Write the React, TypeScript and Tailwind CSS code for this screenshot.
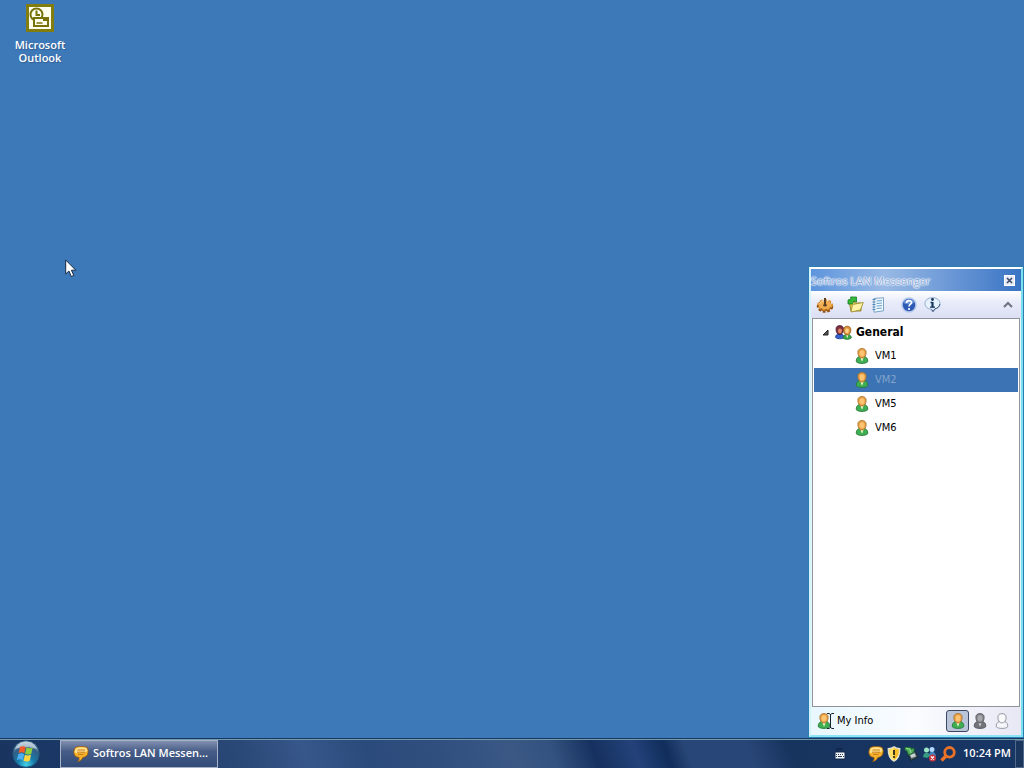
import React from "react";

type Tone = "color" | "grey" | "white";

const TONES = {
  color: { head: "#eda447", hi: "#ffd184", line: "#a8702c", body: "#3fae52", edge: "#257b3a", tie: "#f4f7c5" },
  grey: { head: "#85878c", hi: "#b4b6ba", line: "#55575c", body: "#73757b", edge: "#505258", tie: "#d9dadd" },
  white: { head: "#f4f5f9", hi: "#ffffff", line: "#8d9099", body: "#f4f5f9", edge: "#8d9099", tie: "#ffffff" },
};

function Person({ tone = "color" }: { tone?: Tone }) {
  const t = TONES[tone];
  return (
    <svg width="14" height="16" viewBox="0 0 14 16" aria-hidden="true" className="shrink-0">
      <path d="M1.300 13.800C1 11 2 9.300 4.500 8.500h5c2.500.8 3.500 2.500 3.200 5.300-2 2.200-9.400 2.200-11.400 0Z" fill={t.body} stroke={t.edge} strokeWidth="0.900" />
      <path d="M5 8.500 7 13.800 9 8.500Z" fill={t.tie} />
      <path d="M2.900 4.300C2.700 2 4.500.6 7 .6s4.300 1.400 4.100 3.700C11.200 7.700 9.300 10 7 10S2.800 7.700 2.900 4.300Z" fill={t.head} stroke={t.line} strokeWidth="0.900" />
      <ellipse cx="7" cy="5.200" rx="2.400" ry="3" fill={t.hi} opacity="0.700" />
    </svg>
  );
}

function Group() {
  return (
    <svg width="17" height="15" viewBox="0 0 17 15" aria-hidden="true" className="shrink-0">
      <path d="M.6 12.500C.5 10 2 9 4.500 8.800 7.500 9 9 10 8.800 13 6 14.300 2 14 .6 12.500Z" fill="#3462cf" stroke="#1d3d91" strokeWidth="0.8" />
      <path d="M1 4.500C.8 1.800 2.500.6 4.800.6s4 1.500 3.800 4C8.500 7.500 7 9.600 4.800 9.600S1.200 7.500 1 4.500Z" fill="#7d2f3c" stroke="#4c1c3c" strokeWidth="0.8" />
      <ellipse cx="5" cy="6" rx="2" ry="2.400" fill="#e58b68" />
      <path d="M8 13C8 10.600 9.500 9.500 12 9.400c2.800.1 4.400 1.300 4.300 3.600C14 14.800 10 14.800 8 13Z" fill="#36a545" stroke="#1e762e" strokeWidth="0.8" />
      <path d="m11 9.500 1.200 4 1.300-4z" fill="#f3f5d0" />
      <path d="M8.600 5C8.500 2.500 10 1.200 12.200 1.200S16 2.500 15.800 5c0 3-1.500 5-3.600 5S8.600 8 8.600 5Z" fill="#dc9136" stroke="#92591d" strokeWidth="0.8" />
      <ellipse cx="12" cy="5.800" rx="1.900" ry="2.500" fill="#ffd38b" />
    </svg>
  );
}

function Bubble() {
  return (
    <svg width="16" height="16" viewBox="0 0 16 16" aria-hidden="true" className="shrink-0">
      <path d="M2.500 1.500C5 .2 11.500.2 14 1.500c1.800 2.700 1.500 6.500-.5 8.500-1.300 1-2.500 1.300-3.700 1.500-.8 2.200-2.300 3.500-5.300 4 1.500-1.300 1.800-2.500 1.500-4-1.500-.2-3-.7-4-1.700C.2 7.500.6 4 2.500 1.500Z" fill="#f6b22c" stroke="#95570d" strokeWidth="0.800" />
      <path d="M3 2C5.500 1 11 1 13.500 2c.8 1.500.9 2.500.7 3.500-4 1.300-8.500 1.800-12.500 1.200C1.500 5 2 3.500 3 2Z" fill="#ffe08a" />
      <path d="M4.500 4h7.500M4 6.200h8M5 8.400h5.500" stroke="#bd7317" strokeWidth="0.900" />
    </svg>
  );
}

function OutlookIcon() {
  return (
    <svg width="28" height="28" viewBox="0 0 28 28" aria-hidden="true">
      <path d="M0 0h28v28H0z" fill="#817d0e" />
      <path d="M3 3h22v22H3z" fill="#fffff0" />
      <circle cx="10.500" cy="10.500" r="6" fill="#fffff0" stroke="#77720a" strokeWidth="2" />
      <path d="M10.500 6.500V11H14" fill="none" stroke="#77720a" strokeWidth="2" />
      <path d="M8 14h14v8H8z" fill="#fffff0" stroke="#77720a" strokeWidth="2" />
      <path d="M17 14h4v3h-4z" fill="#77720a" />
      <path d="M10.500 19h6" stroke="#77720a" strokeWidth="1.500" />
    </svg>
  );
}

function Gear() {
  return (
    <svg width="18" height="16" viewBox="0 0 18 16" aria-hidden="true">
      <ellipse cx="9" cy="9.500" rx="6.800" ry="4.800" fill="none" stroke="#8d4f12" strokeWidth="2.800" strokeDasharray="2.600 1.700" />
      <ellipse cx="9" cy="9.500" rx="6.600" ry="4.800" fill="#a96213" />
      <ellipse cx="9" cy="7.700" rx="6.800" ry="4.500" fill="none" stroke="#df963b" strokeWidth="2.200" strokeDasharray="2.600 1.700" />
      <ellipse cx="9" cy="7.700" rx="6.500" ry="4.300" fill="#efad50" />
      <path d="M3.500 7C5 4.500 7 4 8 4" stroke="#ffe0a2" fill="none" />
      <path d="M8 1h2v7H8z" fill="#5b3d22" />
      <ellipse cx="9" cy="8.300" rx="1.800" ry="1.200" fill="#5b3d22" />
    </svg>
  );
}

function Folder() {
  return (
    <svg width="17" height="17" viewBox="0 0 17 17" aria-hidden="true">
      <path d="M2 5h5l1 2h6v8H4z" fill="#edcf54" stroke="#8e8127" strokeWidth="0.9" />
      <path d="M5.500 8.500 16.300 6.500l-3 7.500L4 16z" fill="#fff4a5" stroke="#9b912f" strokeWidth="0.9" />
      <path d="M1 8V4l3-1-.5-2h6v5L7 5 5 8z" fill="#36b93a" stroke="#147b22" strokeWidth="0.8" />
    </svg>
  );
}

function Notebook() {
  return (
    <svg width="14" height="16" viewBox="0 0 14 16" aria-hidden="true">
      <path d="M3 1.500 12.500.8v13L3 15.200z" fill="#eff9ff" stroke="#6d97bb" strokeWidth="0.9" />
      <path d="M5.500 4 11 3.500M5.500 6.500l5.500-.5M5.500 9l5.500-.5M5.500 11.500 11 11" stroke="#699fc9" />
      <path d="M1.500 2.500h3M1.500 5h3M1.500 7.500h3M1.500 10h3M1.500 12.500h3" stroke="#4f88b4" />
    </svg>
  );
}

function Help() {
  return (
    <svg width="16" height="16" viewBox="0 0 16 16" aria-hidden="true">
      <circle cx="8" cy="8" r="7" fill="#2d59b5" stroke="#b5c8ec" strokeWidth="1.500" />
      <path d="M2.500 6c1-4.500 10-5 11-.5-2 2-8 2.500-11 .5Z" fill="#6f93d8" />
      <path d="M5.500 6C5.500 2.800 10.700 3 10.500 5.800 10.400 7.500 8 7.500 8 9.500" fill="none" stroke="#fff" strokeWidth="1.600" />
      <circle cx="8" cy="12" r="1.100" fill="#fff" />
    </svg>
  );
}

function Info() {
  return (
    <svg width="17" height="16" viewBox="0 0 17 16" aria-hidden="true">
      <path d="M8.500.7C13 .7 16 3.300 16 6.600c0 3-2 4.800-5 5.400L9 15l-2-2.800C3.500 11.700 1 9.800 1 6.600 1 3.300 4 .7 8.500.7Z" fill="#e7f2ff" stroke="#90a9ca" />
      <path d="M15.800 7c-.3 2.800-2.300 4.300-5 4.800L9 14.500l-1.500-2.300" fill="none" stroke="#435f83" />
      <circle cx="8.500" cy="2.500" r="1.400" fill="#17375d" />
      <path d="M6.500 5.500h2M6 10.200h5" stroke="#17375d" strokeWidth="1.300" />
      <path d="M8.500 5V10.500" stroke="#17375d" strokeWidth="2.200" />
    </svg>
  );
}

function StartOrb() {
  return (
    <svg width="28" height="28" viewBox="0 0 28 28" aria-hidden="true">
      <defs>
        <radialGradient id="orb" cx="50%" cy="90%" r="90%">
          <stop stopColor="#47d3e9" />
          <stop offset=".35" stopColor="#177ba9" />
          <stop offset=".7" stopColor="#315d86" />
          <stop offset="1" stopColor="#c3d4df" />
        </radialGradient>
      </defs>
      <circle cx="14" cy="14" r="13.300" fill="url(#orb)" stroke="#1d5278" />
      <path d="M3 9C6-.5 22-.5 25 9c-6-2.500-16-2.500-22 0Z" fill="#d5e2e9" opacity=".65" />
      <path d="M8 7c2-1.200 4-1 5.700 0l-1.400 6.200c-1.800-1.200-3.800-1-5.800 0z" fill="#f05b29" />
      <path d="M14.500 7.500c2 1 4 1.200 6.200 0l-1.400 6.200c-2 1.200-4.300 1-6.200 0z" fill="#8fce3e" />
      <path d="M6.300 14.200c2-1.200 4-1 5.800 0l-1.400 6c-1.800-1.200-3.800-1-5.800 0z" fill="#4daff2" />
      <path d="M12.900 14.700c2 1 4.200 1 6.200 0l-1.400 6c-2 1.200-4.300 1-6.200 0z" fill="#ffd43e" />
    </svg>
  );
}

function Keyboard() {
  return (
    <svg width="12" height="12" viewBox="0 0 12 12" aria-hidden="true">
      <path d="M3 3V1h6" fill="none" stroke="#10264a" strokeWidth="1.500" />
      <path d="M1 4h10v7H1z" fill="#f5f7fb" stroke="#10264a" />
      <path d="M2 6.500h1m1 0h1m1 0h1m1 0h1M2 8.500h1m1 0h4m1 0h1" stroke="#243958" />
    </svg>
  );
}

function Shield() {
  return (
    <svg width="14" height="16" viewBox="0 0 14 16" aria-hidden="true">
      <path d="M7 .8c2 1.500 4 1.800 5.800 1.800C13 8.500 11.500 13 7 15.200 2.500 13 1 8.500 1.200 2.600 3 2.600 5 2.300 7 .8Z" fill="#ffe064" stroke="#dfe3d6" strokeWidth="1.200" />
      <path d="M7 2v12c3.500-2 4.800-6 4.700-10.400C10 3.500 8.300 3 7 2Z" fill="#f5bd2c" />
      <path d="M7 4v5" stroke="#252617" strokeWidth="1.800" />
      <circle cx="7" cy="11" r="1.100" fill="#252617" />
    </svg>
  );
}

function Device() {
  return (
    <svg width="15" height="15" viewBox="0 0 15 15" aria-hidden="true">
      <path d="m4 8 7-3 3 6-7 3.500z" fill="#525f65" stroke="#16262c" />
      <path d="m6 9 4.500-1.800 1.500 3L7.500 12z" fill="#c7d0d0" />
      <path d="M1 1.500h6V3l3-1v4L7 8 4.500 9 3 5 1 4z" fill="#51a95a" stroke="#196f2e" strokeWidth=".800" />
      <path d="m2 2 4 1.500L7 7" stroke="#9ae496" fill="none" />
    </svg>
  );
}

function Network() {
  return (
    <svg width="15" height="16" viewBox="0 0 15 16" aria-hidden="true">
      <path d="M1 11c0-5 6-6 7-1L5 12z" fill="#369c80" />
      <circle cx="4.500" cy="4" r="2.500" fill="#9be6c7" />
      <path d="M7 10c0-6 6-6 7 0l-3 2z" fill="#3f86ba" />
      <circle cx="10" cy="3.500" r="2.500" fill="#b2dcff" />
      <circle cx="10.500" cy="12" r="3.500" fill="#c93a42" />
      <path d="m9 10.500 3 3m0-3-3 3" stroke="#fff" strokeWidth="1.300" />
    </svg>
  );
}

function Magnifier() {
  return (
    <svg width="16" height="16" viewBox="0 0 16 16" aria-hidden="true">
      <circle cx="9.500" cy="6.300" r="4.800" fill="none" stroke="#ea7229" strokeWidth="2.800" />
      <path d="m6 10-4.500 4.500" stroke="#ea7229" strokeWidth="3.400" />
    </svg>
  );
}

const contacts = ["VM1", "VM2", "VM5", "VM6"];

function Messenger() {
  return (
    <section aria-label="Softros LAN Messenger" className="absolute right-px bottom-px flex h-[470px] w-[214px] flex-col border-2 border-t-white border-r-[#7bdff2] border-b-[#8ce5f6] border-l-[#d3f2fc] bg-[#e7f6fc] font-['DejaVu_Sans_Condensed','DejaVu_Sans',sans-serif] text-[11px] text-black shadow-[0_0_0_1px_#2d7eb0]">
      <header className="flex h-[22px] shrink-0 items-center justify-between bg-linear-to-r from-[#5c94dc] via-[#98b9e5] via-35% to-[#3974c4] pr-[6px]">
        <h1 className="pt-[2px] font-['Open_Sans',sans-serif] text-[11px] leading-4 font-medium whitespace-nowrap text-[#86a9da] [text-shadow:0_0_1px_#fff,0_0_1px_#fff,0_0_2px_#fff,0_0_2px_#fff]">Softros LAN Messenger</h1>
        <button aria-label="Close" className="flex size-[11px] items-center justify-center border border-white bg-[#e6ebf5]">
          <svg width="7" height="7" viewBox="0 0 7 7" aria-hidden="true"><path d="m1 1 5 5m0-5L1 6" stroke="#3f4d68" strokeWidth="1.700" /></svg>
        </button>
      </header>
      <div className="flex h-[27px] shrink-0 items-center bg-linear-to-b from-white via-[#e9ecfa] via-40% to-[#dcdff3] pl-[5px]">
        <button aria-label="Settings"><Gear /></button>
        <button aria-label="Received files" className="ml-[13px]"><Folder /></button>
        <button aria-label="History" className="ml-[7px]"><Notebook /></button>
        <button aria-label="Help" className="ml-4"><Help /></button>
        <button aria-label="About" className="ml-[7px]"><Info /></button>
        <button aria-label="Collapse toolbar" className="mr-2 ml-auto">
          <svg width="10" height="8" viewBox="0 0 10 8" aria-hidden="true"><path d="m1 6 4-4 4 4" fill="none" stroke="#6d7482" strokeWidth="2" /></svg>
        </button>
      </div>
      <div className="mx-px flex-1 border border-[#8f939c] bg-white px-px pt-px">
        <div className="flex h-6 items-center pl-2">
          <svg width="7" height="7" viewBox="0 0 7 7" aria-hidden="true"><path d="M6 1v5H1z" fill="#555" stroke="#222" /></svg>
          <span className="ml-[6px]"><Group /></span>
          <span className="ml-1 text-[12px] font-bold">General</span>
        </div>
        <ul>
          {contacts.map((name) => (
            <li key={name}>
              <button className={name === "VM2" ? "flex h-6 w-full items-center gap-[6px] bg-[#3b73b4] pl-[41px] text-[#82a3ca]" : "flex h-6 w-full items-center gap-[6px] pl-[41px]"}>
                <Person />
                {name}
              </button>
            </li>
          ))}
        </ul>
      </div>
      <footer className="flex h-7 shrink-0 items-center bg-linear-to-r from-[#e7f8fe] via-[#fbfcff] to-[#e7e8f4] px-[6px]">
        <button className="flex items-center">
          <Person />
          <svg width="7" height="16" viewBox="0 0 7 16" aria-hidden="true" className="-ml-1"><path d="M0 .5h2l1.500 1L5 .5h2M3.500 1v14M0 15.500h2l1.500-1 1.500 1h2" fill="none" stroke="#172332" /></svg>
          <span className="ml-[3px]">My Info</span>
        </button>
        <div className="ml-auto flex items-center gap-[8px]">
          <button aria-label="Available" aria-pressed="true" className="flex h-[22px] w-[23px] items-center justify-center rounded-[3px] border border-[#3b4863] bg-[#b9c4d9]"><Person /></button>
          <button aria-label="Away" className="-ml-1"><Person tone="grey" /></button>
          <button aria-label="Invisible" className="mr-[6px]"><Person tone="white" /></button>
        </div>
      </footer>
    </section>
  );
}

export default function App() {
  return (
    <div className="flex min-h-screen flex-col bg-[#3d79b8]">
      <main className="relative min-h-[500px] flex-1 overflow-hidden">
        <button className="ml-[10px] flex w-[60px] flex-col items-center pt-1 font-['Open_Sans',sans-serif] text-[11px] leading-[13px] font-semibold text-white [text-shadow:1px_1px_1px_#315d91]">
          <OutlookIcon />
          <span className="mt-[6px]">Microsoft<br />Outlook</span>
        </button>
        <svg width="12" height="19" viewBox="0 0 12 19" className="absolute top-[259px] left-[65px]" aria-hidden="true">
          <path d="M.7 1v14l3.200-3 2.400 5.500 2.500-1.100-2.400-5.200h4.400z" fill="#fff" stroke="#172941" />
        </svg>
        <Messenger />
      </main>
      <nav aria-label="Taskbar" className="flex h-[30px] shrink-0 items-center border-t border-[#17375f] bg-[#1b3765] font-['Open_Sans',sans-serif] text-[11px] font-semibold text-white">
        <div className="flex h-full w-full items-center border-t border-[#729baf] bg-[linear-gradient(70deg,#19345f_0%,#1c3969_10%,#2b4977_24%,#37568a_30%,#2b4b7c_36%,#304f7f_43%,#3b5885_50%,#34527f_54%,#16315f_58%,#24427a_62%,#102d5b_65%,#294678_67%,#294678_73%,#17345f_77%,#183664_100%)]">
          <button aria-label="Start" className="ml-3"><StartOrb /></button>
          <button className="ml-5 flex h-full w-[158px] items-center border border-[#a6b1c7] bg-linear-to-b from-[#8290b0] via-[#475d87] via-40% to-[#314a77] pb-px pl-3">
            <Bubble />
            <span className="ml-1 whitespace-nowrap">Softros LAN Messen...</span>
          </button>
          <div className="ml-auto flex h-full items-center">
            <button aria-label="Keyboard" className="mr-[22px]"><Keyboard /></button>
            <div className="flex items-center gap-[3px] pb-px">
              <button aria-label="Messages"><Bubble /></button>
              <button aria-label="Security"><Shield /></button>
              <button aria-label="Devices"><Device /></button>
              <button aria-label="Network"><Network /></button>
              <button aria-label="Search"><Magnifier /></button>
            </div>
            <time className="mr-1 ml-[7px] pb-px whitespace-nowrap">10:24 PM</time>
            <button aria-label="Show desktop" className="h-full w-[9px] border border-[#53698b] bg-[#1b365c]" />
          </div>
        </div>
      </nav>
    </div>
  );
}
